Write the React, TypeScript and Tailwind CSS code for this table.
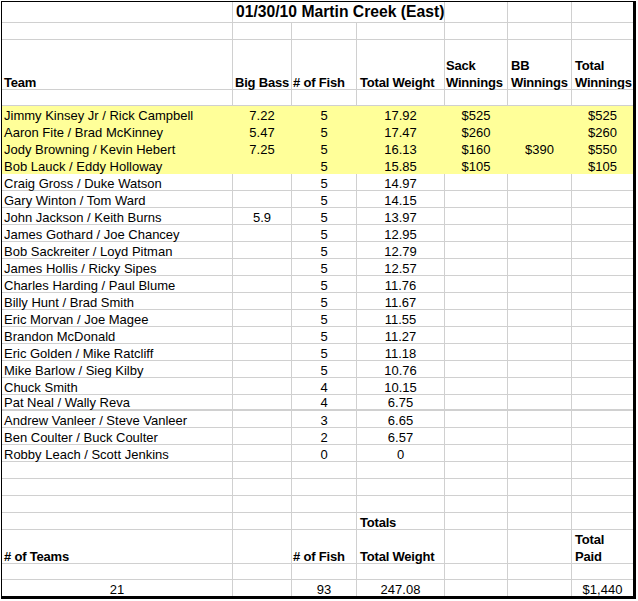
import React from 'react';

const W = ['w-[231px]', 'w-[59px]', 'w-[65px]', 'w-[88px]', 'w-[63px]', 'w-[64px]', 'w-[61px]'];
const PL = ['pl-[2px]', 'pl-[2px]', 'pl-[1px]', 'pl-[3px]', 'pl-[1px]', 'pl-[3px]', 'pl-[3px]'];

type CellValue = React.ReactNode;

interface RowProps {
  h: string;
  cells?: CellValue[];
  yellow?: boolean;
  bottom?: string;
  bold?: boolean;
  center?: boolean;
  centerFirst?: boolean;
}

const Row = ({
  h,
  cells = [],
  yellow = false,
  bottom = 'border-b',
  bold = false,
  center = false,
  centerFirst = false,
}: RowProps) => {
  const line = yellow ? 'border-transparent' : 'border-[#d0d0d0]';
  return (
    <div className={`flex ${h} ${bottom} ${line} ${yellow ? 'bg-[#ffff99]' : ''}`}>
      {W.map((w, i) => {
        const value = cells[i];
        const centered = center && (i > 0 || centerFirst);
        return (
          <div
            key={i}
            className={`flex items-end shrink-0 ${w} ${i < 6 ? 'border-r' : ''} ${line} ${
              centered ? 'justify-center' : PL[i]
            } ${i === 6 ? 'overflow-hidden' : ''}`}
          >
            {value !== undefined && value !== '' && (
              <span
                className={`block whitespace-nowrap leading-[17px] mb-[-2px] ${
                  bold ? 'font-bold tracking-[-0.2px]' : ''
                }`}
              >
                {value}
              </span>
            )}
          </div>
        );
      })}
    </div>
  );
};

const teams: string[][] = [
  ['Jimmy Kinsey Jr / Rick Campbell', '7.22', '5', '17.92', '$525', '', '$525'],
  ['Aaron Fite / Brad McKinney', '5.47', '5', '17.47', '$260', '', '$260'],
  ['Jody Browning / Kevin Hebert', '7.25', '5', '16.13', '$160', '$390', '$550'],
  ['Bob Lauck / Eddy Holloway', '', '5', '15.85', '$105', '', '$105'],
  ['Craig Gross / Duke Watson', '', '5', '14.97'],
  ['Gary Winton / Tom Ward', '', '5', '14.15'],
  ['John Jackson / Keith Burns', '5.9', '5', '13.97'],
  ['James Gothard / Joe Chancey', '', '5', '12.95'],
  ['Bob Sackreiter / Loyd Pitman', '', '5', '12.79'],
  ['James Hollis / Ricky Sipes', '', '5', '12.57'],
  ['Charles Harding / Paul Blume', '', '5', '11.76'],
  ['Billy Hunt / Brad Smith', '', '5', '11.67'],
  ['Eric Morvan / Joe Magee', '', '5', '11.55'],
  ['Brandon McDonald', '', '5', '11.27'],
  ['Eric Golden / Mike Ratcliff', '', '5', '11.18'],
  ['Mike Barlow / Sieg Kilby', '', '5', '10.76'],
  ['Chuck Smith', '', '4', '10.15'],
  ['Pat Neal / Wally Reva', '', '4', '6.75'],
  ['Andrew Vanleer / Steve Vanleer', '', '3', '6.65'],
  ['Ben Coulter / Buck Coulter', '', '2', '6.57'],
  ['Robby Leach / Scott Jenkins', '', '0', '0'],
];

const App = () => {
  return (
    <div className="w-[638px] h-[601px] bg-white pt-px pl-px text-[13px] text-black font-['Liberation_Sans',Arial,sans-serif]">
      <div className="w-[635px] border-t border-l border-r-[3px] border-b-[3px] border-black">
        {/* title row, text spills over three columns */}
        <div className="flex h-[21px] border-b border-[#d0d0d0]">
          <div className="w-[231px] shrink-0 border-r border-[#d0d0d0]" />
          <div className="w-[212px] shrink-0 border-r border-[#d0d0d0] pl-[3px]">
            <span className="block whitespace-nowrap font-bold text-[15.7px] leading-[20px]">
              01/30/10 Martin Creek (East)
            </span>
          </div>
          <div className="w-[63px] shrink-0 border-r border-[#d0d0d0]" />
          <div className="w-[64px] shrink-0 border-r border-[#d0d0d0]" />
          <div className="w-[61px] shrink-0" />
        </div>
        <Row h="h-[17px]" />
        <Row
          h="h-[50px]"
          bold
          cells={[
            'Team',
            'Big Bass',
            '# of Fish',
            'Total Weight',
            <>Sack<br />Winnings</>,
            <>BB<br />Winnings</>,
            <>Total<br />Winnings</>,
          ]}
        />
        <Row h="h-[16px]" />
        {teams.map((t, i) => (
          <Row
            key={t[0]}
            h={i === 17 ? 'h-[16px]' : 'h-[17px]'}
            bottom={i === 17 ? 'border-b-2' : 'border-b'}
            yellow={i < 4}
            center
            cells={t}
          />
        ))}
        <Row h="h-[17px]" />
        <Row h="h-[17px]" />
        <Row h="h-[17px]" />
        <Row h="h-[17px]" bold cells={['', '', '', 'Totals']} />
        <Row
          h="h-[34px]"
          bold
          cells={['# of Teams', '', '# of Fish', 'Total Weight', '', '', <>Total<br />Paid</>]}
        />
        <Row h="h-[16px]" />
        <Row
          h="h-[16px]"
          bottom=""
          center
          centerFirst
          cells={['21', '', '93', '247.08', '', '', '$1,440']}
        />
      </div>
    </div>
  );
};

export default App;
